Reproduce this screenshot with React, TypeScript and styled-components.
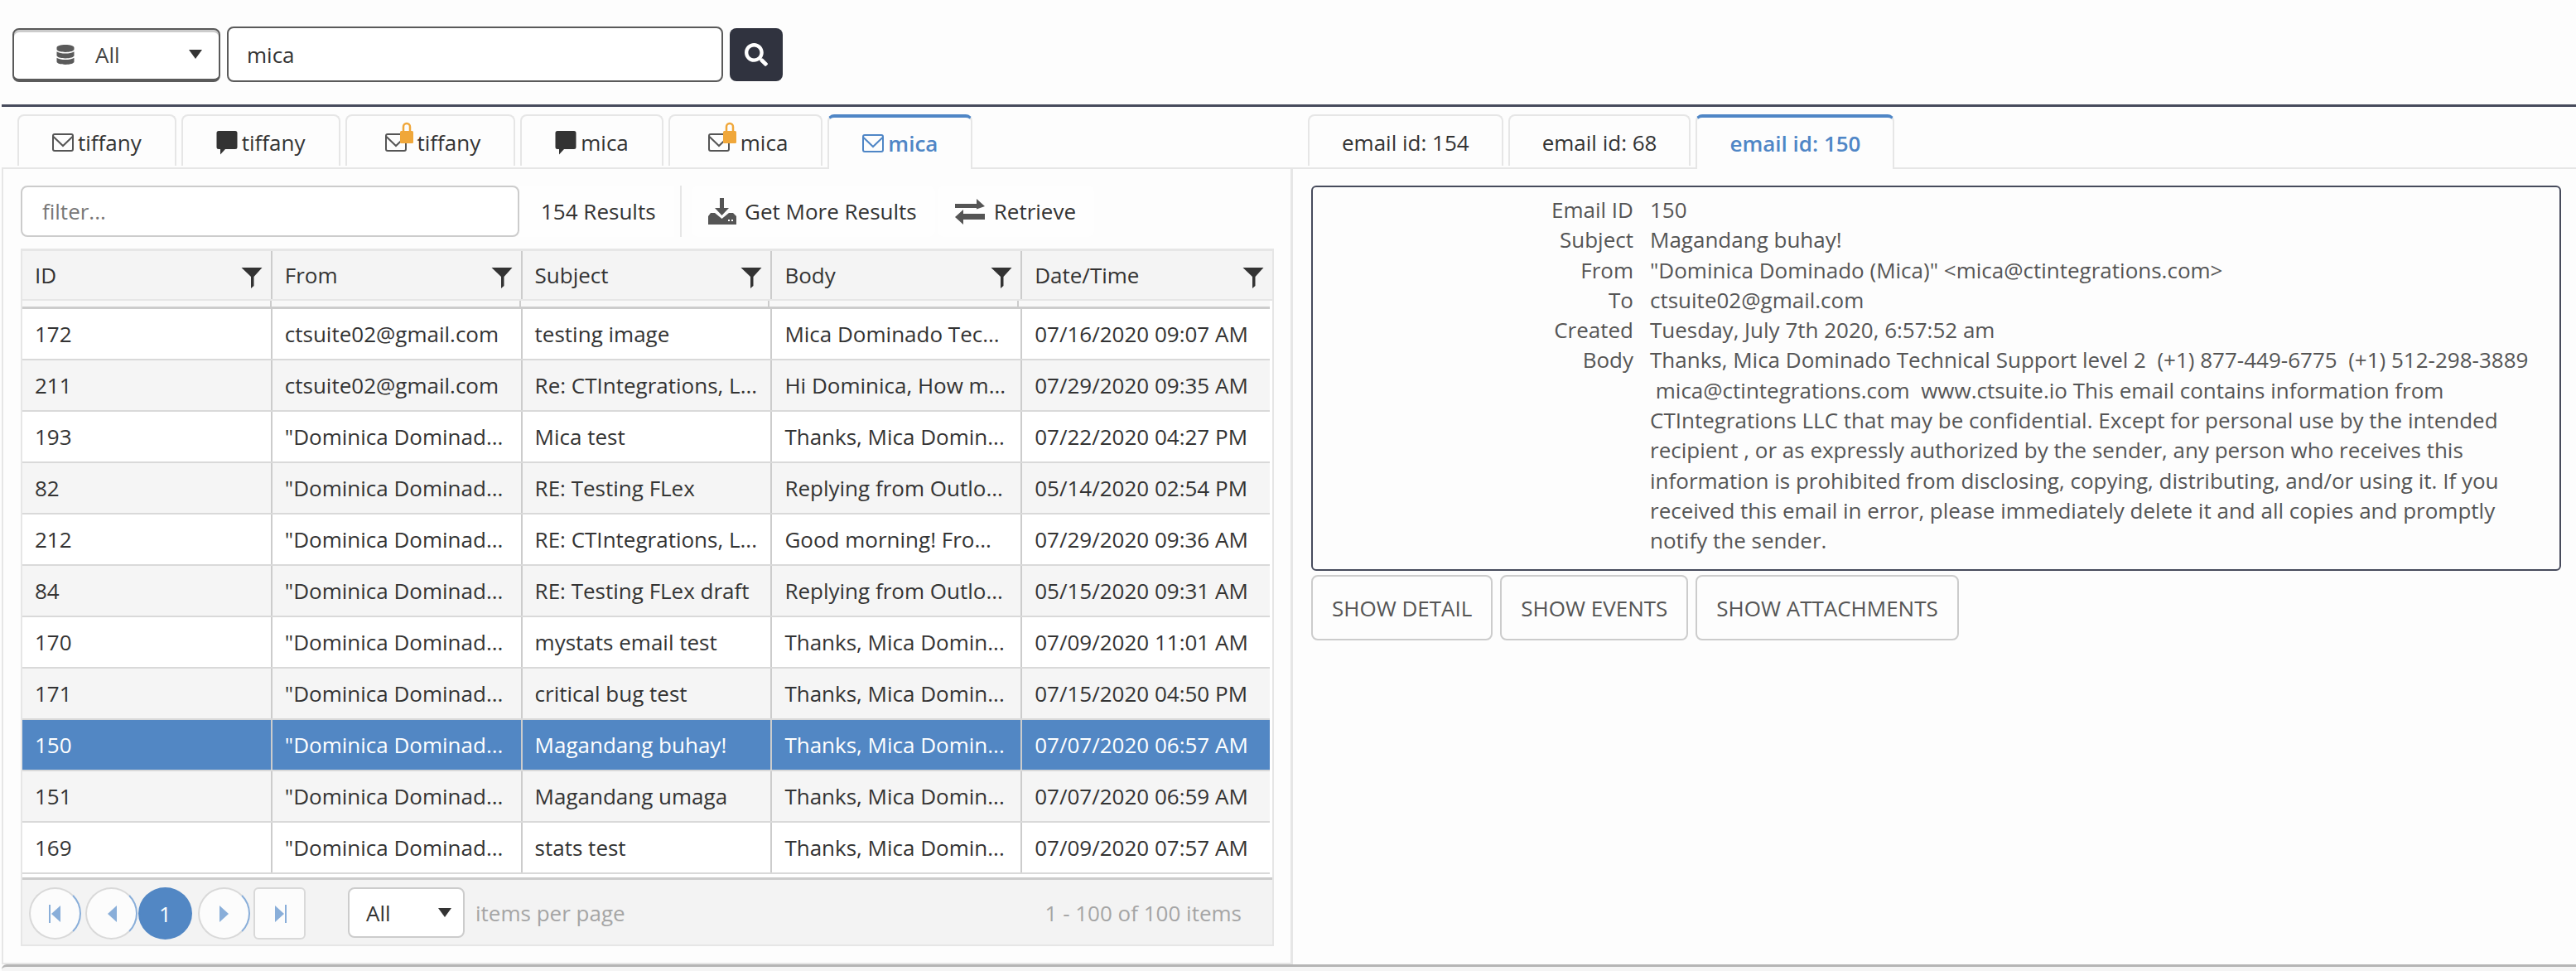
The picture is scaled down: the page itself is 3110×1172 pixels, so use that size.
import React from 'react';
import styled, { createGlobalStyle } from 'styled-components';
import { FaDatabase, FaSearch } from 'react-icons/fa';

const GlobalStyle = createGlobalStyle`
  html, body { margin: 0; padding: 0; background: #fdfdfd; }
  * { box-sizing: border-box; }
`;

const Root = styled.div`
  width: 3110px;
  height: 1172px;
  overflow: hidden;
  display: flex;
  flex-direction: column;
  background: #fdfdfd;
  font-family: 'Open Sans', 'Noto Sans', sans-serif;
  font-size: 26px;
  color: #333;
`;

const TopBar = styled.div`
  height: 129px;
  flex-shrink: 0;
  margin-left: 2px;
  padding: 32px 0 0 13px;
  display: flex;
  align-items: flex-start;
  border-bottom: 3px solid #474b5c;
`;

const ScopeSelect = styled.div`
  width: 251px;
  height: 65px;
  margin-top: 2px;
  display: flex;
  align-items: center;
  padding-left: 50px;
  border: 2px solid #5a5a5a;
  border-bottom-width: 4px;
  box-shadow: inset 0 3px 0 #ccc;
  border-radius: 8px;
  background: #fff;
  font-size: 26px;
  color: #444;
  svg { color: #5a5a5a; font-size: 24px; }
`;

const ScopeLabel = styled.span`
  margin-left: 24px;
  flex: 1;
`;

const Caret = styled.span`
  width: 0;
  height: 0;
  margin-right: ${(props) => props.$right || 20}px;
  border-left: 8px solid transparent;
  border-right: 8px solid transparent;
  border-top: 11px solid #333;
`;

const SearchInput = styled.div`
  width: 599px;
  height: 67px;
  margin-left: 8px;
  padding-left: 22px;
  display: flex;
  align-items: center;
  border: 2px solid #5a5a5a;
  border-radius: 8px;
  background: #fff;
  font-size: 26px;
  color: #333;
`;

const SearchButton = styled.div`
  width: 64px;
  height: 64px;
  margin: 2px 0 0 8px;
  display: flex;
  align-items: center;
  justify-content: center;
  background: #30333f;
  border-radius: 8px;
  color: #fff;
  font-size: 28px;
`;

const Panes = styled.div`
  flex: 1;
  display: flex;
  min-height: 0;
  padding-top: 9px;
`;

const LeftPane = styled.div`
  width: 1561px;
  flex-shrink: 0;
  padding-left: 2px;
  display: flex;
  flex-direction: column;
`;

const RightPane = styled.div`
  flex: 1;
  display: flex;
  flex-direction: column;
`;

const TabRow = styled.div`
  height: 66px;
  flex-shrink: 0;
  display: flex;
  gap: 6px;
  padding-left: ${(props) => props.$inset}px;
  border-bottom: 2px solid #e6e6e6;
`;

const Tab = styled.div`
  height: ${(props) => (props.$active ? '66px' : '62px')};
  padding: ${(props) => (props.$active ? 0 : 4)}px ${(props) => props.$pad || 40}px 0;
  padding-left: ${(props) => props.$padLeft || props.$pad || 40}px;
  display: flex;
  align-items: center;
  gap: 5px;
  font-size: 26px;
  color: ${(props) => (props.$active ? '#4f86c6' : '#333')};
  font-weight: ${(props) => (props.$active ? 600 : 400)};
  background: ${(props) => (props.$active ? '#fdfdfd' : 'transparent')};
  border: 2px solid #e6e6e6;
  border-bottom: 0;
  border-top: ${(props) => (props.$active ? '4px solid #4f86c6' : '2px solid #e6e6e6')};
  border-radius: 8px 8px 0 0;
`;

const TabIconWrap = styled.span`
  position: relative;
  display: inline-flex;
  margin-right: ${(props) => (props.$locked ? 8 : 0)}px;
`;

const TabLock = styled.svg`
  position: absolute;
  left: 18px;
  top: -13px;
`;

const Panel = styled.div`
  flex: 1;
  min-height: 0;
  height: 956px;
  padding: 20px 0 0 21px;
  border-left: 2px solid #e6e6e6;
  border-right: 3px solid #e6e6e6;
  border-bottom: 2px solid #e6e6e6;
`;

const Toolbar = styled.div`
  height: 62px;
  display: flex;
  align-items: stretch;
`;

const FilterInput = styled.div`
  width: 602px;
  height: 62px;
  padding-left: 24px;
  display: flex;
  align-items: center;
  background: #fff;
  border: 2px solid #ccc;
  border-radius: 8px;
  font-size: 26px;
  color: #777;
`;

const ResultCount = styled.div`
  width: 187px;
  padding-left: 26px;
  display: flex;
  align-items: center;
  background: #fefefe;
`;

const Separator = styled.div`
  width: 2px;
  margin: 0 12px 0 7px;
  background: #e6e6e6;
`;

const ToolButton = styled.div`
  display: flex;
  align-items: center;
  gap: 10px;
  padding: 0 22px 0 20px;
  margin-right: 3px;
  background: #fefefe;
  border-radius: 8px;
  color: #333;
`;

const Grid = styled.div`
  width: 1513px;
  margin-top: 14px;
  border: 2px solid #e6e6e6;
  border-top-width: 3px;
  background: #fff;
`;

const HeaderRow = styled.div`
  display: flex;
  height: 60px;
  background: #f4f4f4;
  border-bottom: 2px solid #e6e6e6;
`;

const HeaderCell = styled.div`
  width: 302px;
  padding: 0 10px 0 15px;
  display: flex;
  align-items: center;
  justify-content: space-between;
  border-right: 2px solid #ccc;
  &:last-child { border-right: 0; }
  svg { margin-top: 6px; }
`;

const HeaderGap = styled.div`
  display: flex;
  height: 10px;
  padding-right: 2px;
  background: #f8f8f8;
  border-bottom: 3px solid #ccc;
  margin-right: 3px;
  & > div { width: 302px; border-right: 2px solid #ccc; }
  & > div:last-child { border-right: 0; }
`;

const Row = styled.div`
  display: flex;
  height: 62px;
  margin-right: 3px;
  background: ${(props) => (props.$selected ? '#5287c4' : props.$alt ? '#f5f5f5' : '#fff')};
  color: ${(props) => (props.$selected ? '#fff' : '#333')};
  border-bottom: 2px solid #d9d9d9;
`;

const Cell = styled.div`
  width: 302px;
  padding: 0 14px 0 15px;
  display: flex;
  align-items: center;
  white-space: nowrap;
  overflow: hidden;
  border-right: 2px solid #ccc;
  &:last-child { border-right: 0; width: 299px; }
`;

const Pager = styled.div`
  height: 81px;
  margin-top: 4px;
  padding: 9px 37px 0 8px;
  display: flex;
  align-items: flex-start;
  background: #f3f3f3;
  border-top: 3px solid #ccc;
  color: #a5a5a5;
  font-size: 26px;
`;

const PageButton = styled.div`
  width: ${(props) => (props.$active ? 65 : 63)}px;
  height: 63px;
  margin-right: ${(props) => props.$gap}px;
  display: flex;
  align-items: center;
  justify-content: center;
  color: ${(props) => (props.$active ? '#fff' : '#89aed9')};
  background: ${(props) => (props.$active ? '#5287c4' : '#fcfcfc')};
  border: 2px solid ${(props) => (props.$active ? '#5287c4' : '#d9d9d9')};
  border-right-color: ${(props) => (props.$active ? '#5287c4' : props.$square ? '#d9d9d9' : '#89aed9')};
  border-radius: ${(props) => (props.$square ? '6px' : '50%')};
`;

const PageSizeSelect = styled.div`
  width: 141px;
  height: 61px;
  margin-left: 51px;
  padding-left: 20px;
  display: flex;
  align-items: center;
  justify-content: space-between;
  background: #fff;
  border: 2px solid #ccc;
  border-radius: 8px;
  color: #333;
`;

const PagerText = styled.span`
  height: 61px;
  display: flex;
  align-items: center;
  margin-left: 13px;
`;

const PagerInfo = styled(PagerText)`
  margin-left: auto;
`;

const DetailPanel = styled.div`
  flex: 1;
  padding: 20px 18px 0 22px;
`;

const DetailBox = styled.div`
  height: 465px;
  padding-top: 9px;
  display: grid;
  grid-template-columns: 387px 1fr;
  column-gap: 20px;
  align-content: start;
  border: 2px solid #474b5c;
  border-radius: 6px;
  font-size: 26px;
  line-height: 36.3px;
  color: #555;
`;

const DetailLabel = styled.div`
  text-align: right;
`;

const DetailValue = styled.div`
  white-space: pre;
`;

const ActionRow = styled.div`
  display: flex;
  gap: 9px;
  margin-top: 5px;
`;

const ActionButton = styled.div`
  height: 79px;
  padding: 0 23px;
  display: flex;
  align-items: center;
  border: 2px solid #ccc;
  border-radius: 8px;
  font-size: 26px;
  color: #555;
`;

const FooterBar = styled.div`
  height: 8px;
  flex-shrink: 0;
  margin: 0 0 0 2px;
  background: #f5f5f5;
  border-top: 3px solid #b5b5b5;
  border-radius: 6px 0 0 0;
`;

const EnvelopeIcon = ({ color = '#555' }: { color?: string }) => (
  <svg width="26" height="24" viewBox="0 0 26 24" fill="none" stroke={color} strokeWidth="2">
    <rect x="1" y="2" width="24" height="20" rx="2" />
    <path d="M1.5 5 L13 16 L24.500 5" />
  </svg>
);

const CommentIcon = () => (
  <svg width="26" height="30" viewBox="0 0 26 30" fill="#333">
    <path d="M3 1h20a2.500 2.500 0 0 1 2.500 2.500v17a2.500 2.500 0 0 1-2.500 2.500H11l-6 6.500V23H3a2.500 2.500 0 0 1-2.500-2.500v-17A2.500 2.500 0 0 1 3 1z" />
  </svg>
);

const MailIcon = ({ locked, color }: { locked?: boolean; color?: string }) => (
  <TabIconWrap $locked={locked}>
    <EnvelopeIcon color={color} />
    {locked && (
      <TabLock width="16" height="26" viewBox="0 0 16 26">
        <path d="M4 12V6a4 4 0 0 1 8 0v6" fill="none" stroke="#f0a73a" strokeWidth="2.500" />
        <rect x="0" y="11" width="16" height="15" rx="1.500" fill="#f0a73a" />
      </TabLock>
    )}
  </TabIconWrap>
);

const FilterIcon = ({ color = '#333' }: { color?: string }) => (
  <svg width="26" height="26" viewBox="0 0 26 26" fill={color}>
    <path d="M0.500 1h25L15.500 12v11l-3.500 3V12z" />
  </svg>
);

const DownloadIcon = () => (
  <svg width="34" height="32" viewBox="0 0 34 32" fill="#555">
    <path d="M14 0h5v12h6L16.500 21 8 12h6z" />
    <path d="M0 22l3-4h5l8.500 7 8.500-7h5l4 4v10H0z" />
    <rect x="24" y="26" width="2" height="2" fill="#fff" />
    <rect x="28" y="26" width="2" height="2" fill="#fff" />
  </svg>
);

const SwapIcon = () => (
  <svg width="38" height="32" viewBox="0 0 38 32" fill="#555">
    <path d="M1 7h26V1l10 9-10 3.500V12H1z" />
    <path d="M37 19H11v-5L1 23l10 9v-6h26z" />
  </svg>
);

const PageArrow = ({ dir, bar }: { dir: 'left' | 'right'; bar?: boolean }) => (
  <svg width="16" height="22" viewBox="0 0 16 22" fill="currentColor">
    {dir === 'left' ? <path d="M14 1v20L3 11z" /> : <path d="M2 1v20l11-10z" />}
    {bar && <rect x={dir === 'left' ? 0 : 14} y="0" width="2" height="22" />}
  </svg>
);

const columns = ['ID', 'From', 'Subject', 'Body', 'Date/Time'];
const dom = '"Dominica Dominad...';
const thanks = 'Thanks, Mica Domin...';
const reply = 'Replying from Outlo...';

const rows = [
  ['172', 'ctsuite02@gmail.com', 'testing image', 'Mica Dominado Tec...', '07/16/2020 09:07 AM'],
  ['211', 'ctsuite02@gmail.com', 'Re: CTIntegrations, L...', 'Hi Dominica, How m...', '07/29/2020 09:35 AM'],
  ['193', dom, 'Mica test', thanks, '07/22/2020 04:27 PM'],
  ['82', dom, 'RE: Testing FLex', reply, '05/14/2020 02:54 PM'],
  ['212', dom, 'RE: CTIntegrations, L...', 'Good morning! Fro...', '07/29/2020 09:36 AM'],
  ['84', dom, 'RE: Testing FLex draft', reply, '05/15/2020 09:31 AM'],
  ['170', dom, 'mystats email test', thanks, '07/09/2020 11:01 AM'],
  ['171', dom, 'critical bug test', thanks, '07/15/2020 04:50 PM'],
  ['150', dom, 'Magandang buhay!', thanks, '07/07/2020 06:57 AM'],
  ['151', dom, 'Magandang umaga', thanks, '07/07/2020 06:59 AM'],
  ['169', dom, 'stats test', thanks, '07/09/2020 07:57 AM'],
];

const bodyText = `Thanks, Mica Dominado Technical Support level 2  (+1) 877-449-6775  (+1) 512-298-3889
 mica@ctintegrations.com  www.ctsuite.io This email contains information from
CTIntegrations LLC that may be confidential. Except for personal use by the intended
recipient , or as expressly authorized by the sender, any person who receives this
information is prohibited from disclosing, copying, distributing, and/or using it. If you
received this email in error, please immediately delete it and all copies and promptly
notify the sender.`;

const details = [
  ['Email ID', '150'],
  ['Subject', 'Magandang buhay!'],
  ['From', '"Dominica Dominado (Mica)" <mica@ctintegrations.com>'],
  ['To', 'ctsuite02@gmail.com'],
  ['Created', 'Tuesday, July 7th 2020, 6:57:52 am'],
  ['Body', bodyText],
];

export default function App() {
  return (
    <Root>
      <GlobalStyle />
      <TopBar>
        <ScopeSelect>
          <FaDatabase />
          <ScopeLabel>All</ScopeLabel>
          <Caret />
        </ScopeSelect>
        <SearchInput>mica</SearchInput>
        <SearchButton>
          <FaSearch />
        </SearchButton>
      </TopBar>
      <Panes>
        <LeftPane>
          <TabRow $inset={19}>
            <Tab><MailIcon />tiffany</Tab>
            <Tab><CommentIcon />tiffany</Tab>
            <Tab $padLeft={46}><MailIcon locked />tiffany</Tab>
            <Tab><CommentIcon />mica</Tab>
            <Tab $padLeft={46}><MailIcon locked />mica</Tab>
            <Tab $active><MailIcon color="#4f86c6" />mica</Tab>
          </TabRow>
          <Panel>
            <Toolbar>
              <FilterInput>filter...</FilterInput>
              <ResultCount>154 Results</ResultCount>
              <Separator />
              <ToolButton><DownloadIcon />Get More Results</ToolButton>
              <ToolButton><SwapIcon />Retrieve</ToolButton>
            </Toolbar>
            <Grid>
              <HeaderRow>
                {columns.map((name) => (
                  <HeaderCell key={name}>
                    {name}
                    <FilterIcon />
                  </HeaderCell>
                ))}
              </HeaderRow>
              <HeaderGap>
                {columns.map((name) => (
                  <div key={name} />
                ))}
              </HeaderGap>
              {rows.map((row, index) => (
                <Row key={row[0]} $alt={index % 2 === 1} $selected={row[0] === '150'}>
                  {row.map((value, i) => (
                    <Cell key={i}>{value}</Cell>
                  ))}
                </Row>
              ))}
              <Pager>
                <PageButton $gap={5}><PageArrow dir="left" bar /></PageButton>
                <PageButton $gap={1}><PageArrow dir="left" /></PageButton>
                <PageButton $active $gap={7}>1</PageButton>
                <PageButton $gap={4}><PageArrow dir="right" /></PageButton>
                <PageButton $square $gap={0}><PageArrow dir="right" bar /></PageButton>
                <PageSizeSelect>All<Caret $right={14} /></PageSizeSelect>
                <PagerText>items per page</PagerText>
                <PagerInfo>1 - 100 of 100 items</PagerInfo>
              </Pager>
            </Grid>
          </Panel>
        </LeftPane>
        <RightPane>
          <TabRow $inset={18}>
            <Tab $pad={39}>email id: 154</Tab>
            <Tab $pad={39}>email id: 68</Tab>
            <Tab $pad={39} $active>email id: 150</Tab>
          </TabRow>
          <DetailPanel>
            <DetailBox>
              {details.map(([label, value]) => (
                <React.Fragment key={label}>
                  <DetailLabel>{label}</DetailLabel>
                  <DetailValue>{value}</DetailValue>
                </React.Fragment>
              ))}
            </DetailBox>
            <ActionRow>
              <ActionButton>SHOW DETAIL</ActionButton>
              <ActionButton>SHOW EVENTS</ActionButton>
              <ActionButton>SHOW ATTACHMENTS</ActionButton>
            </ActionRow>
          </DetailPanel>
        </RightPane>
      </Panes>
      <FooterBar />
    </Root>
  );
}
